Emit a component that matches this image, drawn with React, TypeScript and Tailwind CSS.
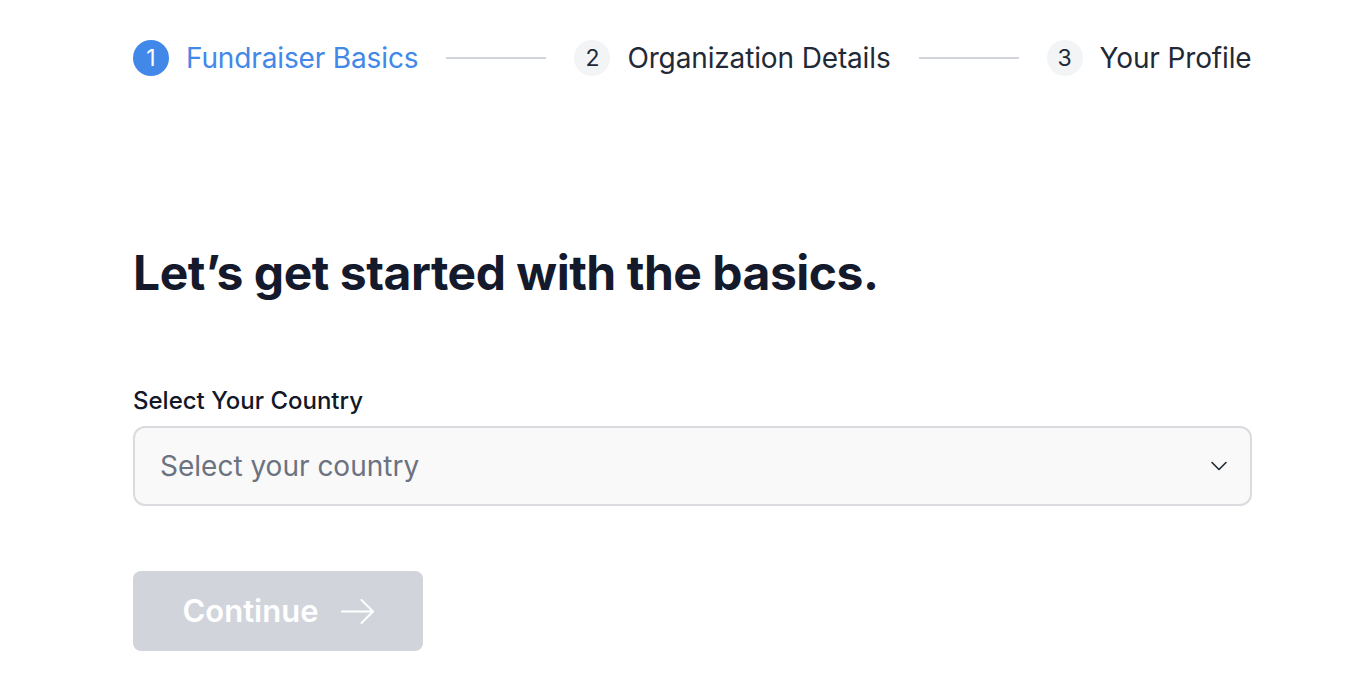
import { ChevronDown } from 'lucide-react';

const steps = [
  { n: 1, label: 'Fundraiser Basics', active: true },
  { n: 2, label: 'Organization Details', active: false },
  { n: 3, label: 'Your Profile', active: false }
];

function LongArrow() {
  return (
    <svg width="33" height="25" viewBox="0 0 33 25" fill="none" stroke="currentColor" strokeWidth="2" strokeLinecap="round" strokeLinejoin="round">
      <path d="M1 12.5h31" />
      <path d="M20.5 1 32 12.5 20.5 24" />
    </svg>
  );
}

export default function App() {
  return (
    <div className="min-h-[692px] bg-white font-['Inter',sans-serif] text-[#111827]">
      <div className="ml-[133px] w-[1119px] pt-[40px]">
        <div className="flex items-center whitespace-nowrap">
          {steps.map((step, idx) => (
            <div key={step.n} className="flex shrink-0 items-center">
              <div className="flex items-center gap-[17px]">
                <div
                  className={`flex h-[36px] w-[36px] shrink-0 items-center justify-center rounded-full text-[23px] ${
                    step.active ? 'bg-[#4188e8] text-white' : 'bg-[#f3f4f6] text-[#1f2937]'
                  }`}
                >
                  {step.n}
                </div>
                <span className={`text-[28px] leading-none tracking-[-0.005em] ${step.active ? 'text-[#4188e8]' : 'text-[#1f2937]'}`}>
                  {step.label}
                </span>
              </div>
              {idx < steps.length - 1 ? <div className="mx-[28px] h-[2px] w-[100px] shrink-0 bg-[#d1d5db]" /> : null}
            </div>
          ))}
        </div>

        <h1 className="mt-[173px] text-[48px] font-bold leading-none tracking-[-0.01em] text-[#141a2b]">
          Let’s get started with the basics.
        </h1>

        <div className="mt-[92px] text-[24px] font-medium leading-none text-[#111827]">Select Your Country</div>
        <button
          type="button"
          className="mt-[13px] flex h-[80px] w-full items-center justify-between rounded-[12px] border-2 border-[#d9dbdf] bg-[#f9f9f9] pl-[25px] pr-[17px] text-left"
        >
          <span className="text-[28px] text-[#6b7280]">Select your country</span>
          <ChevronDown className="h-[28px] w-[28px] text-[#1f2937]" strokeWidth={1.4} />
        </button>

        <button
          type="button"
          className="mt-[65px] flex h-[80px] w-[290px] items-center justify-center gap-[22px] rounded-[8px] bg-[#d1d5db] text-[31px] font-semibold text-white"
        >
          <span>Continue</span>
          <LongArrow />
        </button>
      </div>
    </div>
  );
}
